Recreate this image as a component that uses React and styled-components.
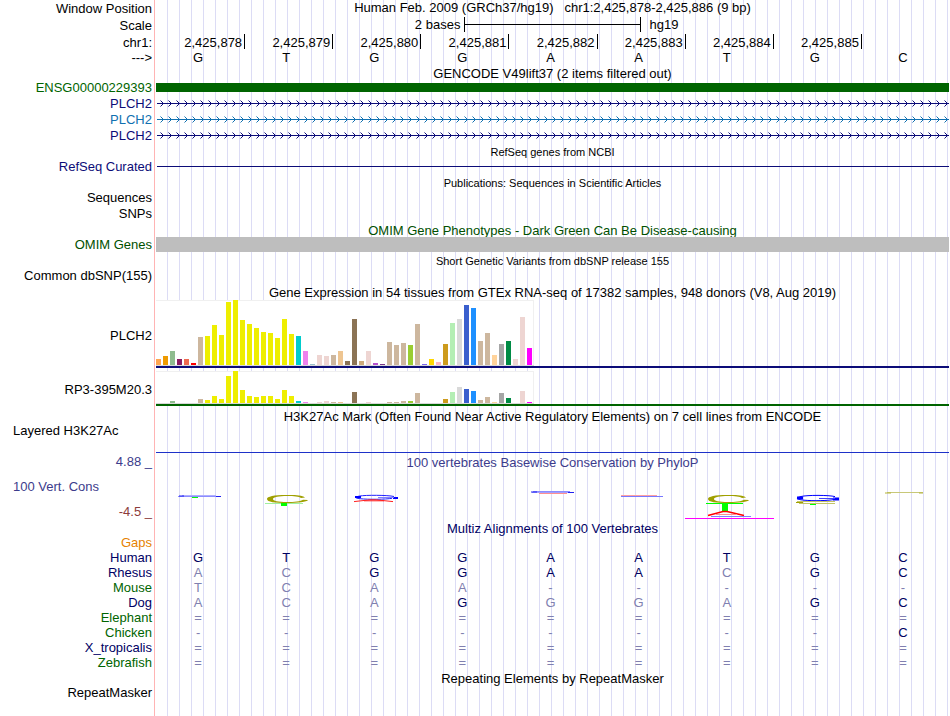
import React from 'react'
import styled, { createGlobalStyle } from 'styled-components'

const GlobalStyle = createGlobalStyle`
  * {
    box-sizing: border-box;
  }

  body {
    margin: 0;
    background: #fff;
    color: #000;
    font-family: "Liberation Sans", Arial, Helvetica, sans-serif;
    font-size: 13px;
    line-height: 15px;
  }
`

// pink divider after the labels, then a guide line every 12px
const Browser = styled.main`
  min-height: 100vh;
  padding-right: 1px;
  background-image:
    linear-gradient(#ffb4b4, #ffb4b4),
    repeating-linear-gradient(to right, transparent 0 11px, #dcdcf5 11px 12px);
  background-repeat: no-repeat;
  background-position: 154px 0, 156px 0;
  background-size: 1px 100%, 100% 100%;
`

const Row = styled.div`
  display: flex;
  height: ${(p) => p.$h || 16}px;
  line-height: ${(p) => p.$lh || 15}px;
`

const Label = styled.div`
  flex: 0 0 156px;
  padding-right: 4px;
  text-align: right;
  white-space: nowrap;
  color: ${(p) => p.$color || '#000'};
`

const SideLabel = styled(Label)`
  padding-left: 13px;
  text-align: left;
`

const Track = styled.div`
  flex: 1;
  min-width: 0;
`

const Title = styled.h2`
  height: ${(p) => p.$h || 15}px;
  margin: 0 0 0 156px;
  font-size: ${(p) => (p.$small ? 11 : 13)}px;
  font-weight: normal;
  line-height: 17px;
  text-align: center;
  white-space: pre;
  color: ${(p) => p.$color || '#000'};
`

const Position = styled(Track)`
  line-height: 15px;
  text-align: center;
  white-space: pre;
`

const Scale = styled(Track)`
  display: flex;
  line-height: 15px;
`

const ScaleText = styled.span`
  flex: 1;
  padding: 0 4px 0 9px;
  text-align: ${(p) => p.$align};
`

const ScaleBar = styled.span`
  flex: 0 0 calc(100% * 2 / 9);
  height: 15px;
  border: solid #000;
  border-width: 0 1px;
  background: linear-gradient(#000, #000) 0 7px / 100% 1px no-repeat;
`

const Columns = styled(Track)`
  display: grid;
  grid-template-columns: repeat(9, 1fr);
`

const Tick = styled.span`
  height: 15px;
  padding-right: 2px;
  border-left: 1px solid #000;
  text-align: right;

  &:first-child {
    border-left: 0;
  }
`

const Base = styled.span`
  padding-right: 4px;
  text-align: center;
`

const Block = styled.div`
  height: ${(p) => p.$h}px;
  margin-top: ${(p) => p.$top || 0}px;
  background: ${(p) => p.$color};
`

const Line = styled.div`
  height: 1px;
  margin: ${(p) => p.$top}px 0 0 1px;
  background: ${(p) => p.$color};
`

const ArrowSvg = styled.svg`
  display: block;
  width: 100%;
  height: 16px;
`

const GeneLabel = styled(Label)`
  padding-top: ${(p) => p.$top}px;
`

const Chart = styled(Track)`
  align-self: flex-start;
  border-bottom: 2px solid ${(p) => p.$color};
`

const Bars = styled.div`
  display: flex;
  align-items: flex-end;
  gap: 2px;
  width: 378px;
  height: ${(p) => p.$h}px;
  background: #fff;
  border-bottom: 1px solid #d8d8d8;
  box-shadow: inset 0 1px #f0f0f0, inset -1px 0 #f0f0f0;
`

const Bar = styled.div`
  flex: 0 0 5px;
`

const ConservationLabels = styled.div`
  display: flex;
  flex-direction: column;
  flex: 0 0 156px;
  gap: 10px;

  ${Label} {
    flex: 0 0 15px;
  }
`

const ConservationTitle = styled(Title)`
  margin: 0;
`

const LogoSvg = styled.svg`
  display: block;
  width: 88px;
  height: 50px;
  overflow: visible;
`

const Alignment = styled.table`
  width: 100%;
  table-layout: fixed;
  border-collapse: collapse;
`

const Species = styled.th`
  width: 156px;
  height: 15px;
  padding: 0 4px 0 0;
  font-weight: normal;
  text-align: right;
  color: ${(p) => p.$color};
`

const Residue = styled.td`
  padding: 0 4px 0 0;
  text-align: center;
  color: ${(p) => (p.$match ? '#000060' : '#8080b0')};
`

const navy = '#0c0c78'
const green = '#006400'

const positions = [
  '2,425,878', '2,425,879', '2,425,880', '2,425,881', '2,425,882',
  '2,425,883', '2,425,884', '2,425,885', '',
]

const genes = [
  { id: 'a', color: navy },
  { id: 'b', color: '#1070b0' },
  { id: 'c', color: navy },
]

const tissueColors = [
  '#ffa54f', '#ee9a00', '#8fbc8f', '#8b1c62', '#ee6a50', '#ff0000', '#cdb79e',
  '#eeee00', '#eeee00', '#eeee00', '#eeee00', '#eeee00', '#eeee00', '#eeee00',
  '#eeee00', '#eeee00', '#eeee00', '#eeee00', '#eeee00', '#eeee00', '#00cdcd',
  '#ee82ee', '#9ac0cd', '#eed5d2', '#eed5d2', '#cdb79e', '#eec591', '#8b7355',
  '#8b7355', '#cdaa7d', '#eed5d2', '#b452cd', '#7a378b', '#cdb79e', '#cdb79e',
  '#cdb79e', '#9acd32', '#cdb79e', '#7a67ee', '#ffd700', '#ffb6c1', '#cd9b1d',
  '#b4eeb4', '#d9d9d9', '#3a5fcd', '#1e90ff', '#cdb79e', '#cdb79e', '#ffd39b',
  '#a6a6a6', '#008b45', '#eed5d2', '#eed5d2', '#ff00ff',
]

const plch2 = [
  6, 9, 14, 6, 6, 2, 28, 29, 40, 30, 63, 65, 45, 41, 37, 33, 32, 27,
  46, 31, 29, 14, 1, 10, 9, 10, 14, 4, 46, 4, 14, 2, 1, 23, 20, 22,
  20, 41, 1, 6, 3, 21, 42, 46, 60, 57, 24, 32, 10, 21, 24, 6, 48, 17,
]

const rp3 = [
  0, 0, 2, 0, 0, 0, 4, 3, 7, 4, 27, 32, 13, 7, 6, 7, 7, 4,
  13, 7, 2, 1, 0, 1, 2, 1, 1, 0, 11, 0, 1, 0, 0, 1, 1, 2,
  2, 10, 0, 0, 0, 4, 11, 16, 14, 12, 3, 6, 1, 10, 5, 0, 12, 1,
]

// lower case marks a base that differs from human
const species = [
  { name: 'Human', color: '#000064', bases: 'GTGGAATGC' },
  { name: 'Rhesus', color: '#000064', bases: 'acGGAAcGC' },
  { name: 'Mouse', color: green, bases: 'tcaa-----' },
  { name: 'Dog', color: '#000064', bases: 'acaGggaGC' },
  { name: 'Elephant', color: green, bases: '=========' },
  { name: 'Chicken', color: green, bases: '--------C' },
  { name: 'X_tropicalis', color: '#000064', bases: '=========' },
  { name: 'Zebrafish', color: green, bases: '=========' },
]

function Gene({ id, color }) {
  return (
    <Row>
      <Label $color={color}>PLCH2</Label>
      <Track>
        <ArrowSvg shapeRendering="crispEdges" aria-hidden="true">
          <defs>
            <pattern id={`arrow-${id}`} width="8" height="16" patternUnits="userSpaceOnUse">
              <path d="M5 5h1v1h-1z M6 6h1v1h-1z M5 9h1v1h-1z M6 8h1v1h-1z" fill={color} />
              <path d="M4 4h1v1h-1z M4 10h1v1h-1z" fill={color} fillOpacity="0.5" />
            </pattern>
          </defs>
          <rect x="1" y="7" width="100%" height="1" fill={color} />
          <rect width="100%" height="16" fill={`url(#arrow-${id})`} />
        </ArrowSvg>
      </Track>
    </Row>
  )
}

function Expression({ name, values, h, rowHeight, color, labelTop }) {
  return (
    <Row $h={rowHeight}>
      <GeneLabel $top={labelTop}>{name}</GeneLabel>
      <Chart $color={color}>
        <Bars $h={h}>
          {values.map((v, i) => (
            <Bar key={i} style={{ height: v, background: tissueColors[i] }} />
          ))}
        </Bars>
      </Chart>
    </Row>
  )
}

const openRing =
  'M61 27.5C58 24.6 48 25 42 25C30 25 23 26.5 23 29C23 32 31 33 43 33C54 33 63 32 64 30L59 29.7C57 31.5 50 32 43 32C34 32 29 31 29 29C29 27 35 26 43 26C50 26 55 26.5 57 28Z'

function Logos() {
  return (
    <Columns>
      <LogoSvg viewBox="0 0 88 50">
        <path d="M26 25.5H60" stroke="#b0b0ff" />
        <path d="M22 26.5H62" stroke="#8c8cff" />
        <path d="M23 26H28M60 26.5H65" stroke="#2020f0" />
        <path d="M36 27.5H42" stroke="#00ff00" />
      </LogoSvg>
      <LogoSvg viewBox="0 0 88 50">
        <path d={openRing} fill="#a0a000" />
        <path d="M21 33.5H59" stroke="#a0f0a0" />
        <path d="M37 33H43V36H37Z" fill="#00ff00" />
      </LogoSvg>
      <LogoSvg viewBox="0 0 88 50">
        <path d="M62 26.5C56 25 33 25 28 26C22 27 22 28 28 28.7C36 29.6 54 29.4 60 28.3" fill="none" stroke="#2020ff" />
        <path d="M23 27H29M61 28H66" stroke="#0000ff" strokeWidth="2" />
        <path d="M46 27.5H62" stroke="#8080ff" />
        <path d="M22 31.6L38 29.8H44L61 31.6M32 30.8H52" fill="none" stroke="#ff2020" />
      </LogoSvg>
      <LogoSvg viewBox="0 0 88 50" />
      <LogoSvg viewBox="0 0 88 50">
        <path d="M25 21.5H62" stroke="#8c8cff" />
        <path d="M24 22.5H64" stroke="#a0a0ff" />
        <path d="M23 22H29M60 22.5H66" stroke="#2020f0" />
        <path d="M31 23.5H59" stroke="#ff9090" />
      </LogoSvg>
      <LogoSvg viewBox="0 0 88 50">
        <path d="M24 25.5H60" stroke="#ffa0a0" />
        <path d="M24 26.5H66" stroke="#7878ff" />
      </LogoSvg>
      <LogoSvg viewBox="0 0 88 50">
        <path d={openRing} fill="#a0a000" />
        <path d="M21 33.5H58" stroke="#00ff00" />
        <path d="M37 33H43V41H37Z" fill="#00ff00" />
        <path d="M23 45.5L38 41.5H42L59 45.5" fill="none" stroke="#ff0000" strokeWidth="1.5" />
        <path d="M31 44.5H52" stroke="#ff9090" />
        <path d="M26 46.5H66" stroke="#8080ff" />
        <path d="M0 48.5H89" stroke="#ff00ff" />
      </LogoSvg>
      <LogoSvg viewBox="0 0 88 50">
        <path d="M62 26.6C56 25 34 25 28 26.5C22 28 24 29.5 31 30.2C41 31 54 30.8 61 29.5" fill="none" stroke="#0000ff" />
        <path d="M24 28H30M60 29H66" stroke="#0000ff" strokeWidth="3" />
        <path d="M46 28.5H62" stroke="#4040ff" />
        <path d="M24 31.5H62M26 33.5H62" stroke="#c4c466" />
        <path d="M23 32.5H30" stroke="#a0a000" />
        <path d="M37 34.5H43" stroke="#00ff00" />
      </LogoSvg>
      <LogoSvg viewBox="0 0 88 50">
        <path d="M26 22.5H62" stroke="#c8c878" />
        <path d="M24 23H30M58 23H62" stroke="#b4b43c" />
      </LogoSvg>
    </Columns>
  )
}

function App() {
  return (
    <>
      <GlobalStyle />
      <Browser>
        <Row $h={17} $lh={17}>
          <Label>Window Position</Label>
          <Position>{'Human Feb. 2009 (GRCh37/hg19)   chr1:2,425,878-2,425,886 (9 bp)'}</Position>
        </Row>
        <Row $h={17} $lh={17}>
          <Label>Scale</Label>
          <Scale>
            <ScaleText $align="right">2 bases</ScaleText>
            <ScaleBar />
            <ScaleText $align="left">hg19</ScaleText>
          </Scale>
        </Row>
        <Row $h={15} $lh={17}>
          <Label>chr1:</Label>
          <Columns>
            {positions.map((p, i) => <Tick key={i}>{p}</Tick>)}
          </Columns>
        </Row>
        <Row $lh={17}>
          <Label>---&gt;</Label>
          <Columns>
            {[...'GTGGAATGC'].map((b, i) => <Base key={i}>{b}</Base>)}
          </Columns>
        </Row>

        <Title>GENCODE V49lift37 (2 items filtered out)</Title>
        <Row>
          <Label $color={green}>ENSG00000229393</Label>
          <Track><Block $h={9} $top={3} $color={green} /></Track>
        </Row>
        {genes.map((g) => <Gene key={g.id} {...g} />)}

        <Title $small>RefSeq genes from NCBI</Title>
        <Row>
          <Label $color={navy}>RefSeq Curated</Label>
          <Track><Line $top={7} $color={navy} /></Track>
        </Row>

        <Title $small>Publications: Sequences in Scientific Articles</Title>
        <Row><Label>Sequences</Label></Row>
        <Row><Label>SNPs</Label></Row>

        <Title $color="#005000">OMIM Gene Phenotypes - Dark Green Can Be Disease-causing</Title>
        <Row>
          <Label $color="#005000">OMIM Genes</Label>
          <Track><Block $h={15} $color="#bebebe" /></Track>
        </Row>

        <Title $small>Short Genetic Variants from dbSNP release 155</Title>
        <Row><Label>Common dbSNP(155)</Label></Row>

        <Title $h={16}>Gene Expression in 54 tissues from GTEx RNA-seq of 17382 samples, 948 donors (V8, Aug 2019)</Title>
        <Expression name="PLCH2" values={plch2} h={66} rowHeight={71} color={navy} labelTop={28} />
        <Expression name="RP3-395M20.3" values={rp3} h={33} rowHeight={37} color={green} labelTop={11} />

        <Title>H3K27Ac Mark (Often Found Near Active Regulatory Elements) on 7 cell lines from ENCODE</Title>
        <Row $h={31}>
          <SideLabel>Layered H3K27Ac</SideLabel>
          <Track><Block $h={1} $top={29} $color="#1e32c8" /></Track>
        </Row>

        <Row $h={66}>
          <ConservationLabels>
            <Label $color="#3c3c8c">4.88 _</Label>
            <SideLabel $color="#3c3c8c">100 Vert. Cons</SideLabel>
            <Label $color="#8c3c3c">-4.5 _</Label>
          </ConservationLabels>
          <Track>
            <ConservationTitle $h={16} $color="#3c3c8c">100 vertebrates Basewise Conservation by PhyloP</ConservationTitle>
            <Logos />
          </Track>
        </Row>

        <Title $color="#000064">Multiz Alignments of 100 Vertebrates</Title>
        <Row $h={15}><Label $color="#e68200">Gaps</Label></Row>
        <Alignment>
          <tbody>
            {species.map((s) => (
              <tr key={s.name}>
                <Species scope="row" $color={s.color}>{s.name}</Species>
                {[...s.bases].map((b, i) => (
                  <Residue key={i} $match={/[A-Z]/.test(b)}>{b.toUpperCase()}</Residue>
                ))}
              </tr>
            ))}
          </tbody>
        </Alignment>

        <Title>Repeating Elements by RepeatMasker</Title>
        <Row><Label>RepeatMasker</Label></Row>
      </Browser>
    </>
  )
}

export default App
